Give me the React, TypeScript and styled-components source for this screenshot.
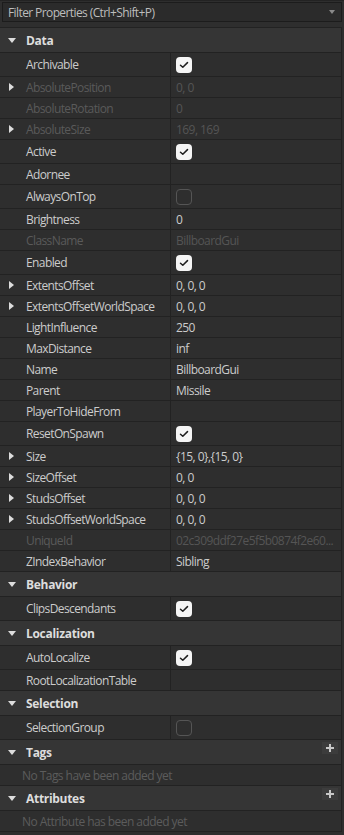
import React from 'react'
import styled, { createGlobalStyle, css } from 'styled-components'

const GlobalStyle = createGlobalStyle`
	html, body {
		margin: 0;
		padding: 0;
		background-color: #2e2e2e;
	}
	body {
		font-family: "Open Sans", "Noto Sans", sans-serif;
		font-size: 12px;
		color: #cccccc;
	}
`

const Panel = styled.div`
	width: 344px;
	height: 835px;
	display: flex;
	flex-direction: column;
	background-color: #2e2e2e;
	overflow: hidden;
`

const FilterBar = styled.div`
	padding: 1px 2px 5px 2px;
	background-color: #2e2e2e;
	border-top: 1px solid #232323;
`

const FilterInput = styled.div`
	height: 18px;
	display: flex;
	align-items: center;
	justify-content: space-between;
	padding: 0 6px 0 5px;
	border: 1px solid #1c1c1c;
	background-color: #2b2b2b;
	color: #bdbdbd;
	letter-spacing: -0.6px;
`

const DropArrow = styled.span`
	width: 0;
	height: 0;
	border-left: 3px solid transparent;
	border-right: 3px solid transparent;
	border-top: 4px solid #8a8a8a;
`

const List = styled.div`
	display: flex;
	flex-direction: column;
	border-top: 1px solid #222222;
	border-right: 1px solid #222222;
	width: 341px;
`

const Header = styled.div`
	height: 24px;
	display: flex;
	align-items: center;
	background-color: #353535;
	border-bottom: 1px solid #222222;
	font-weight: 700;
	color: #dddddd;
	padding-right: 2px;
	letter-spacing: -0.3px;
`

const ArrowCell = styled.div`
	width: 26px;
	flex-shrink: 0;
	display: flex;
	align-items: center;
	padding-left: 8px;
	box-sizing: border-box;
`

const DownTri = styled.span`
	width: 0;
	height: 0;
	border-left: 4px solid transparent;
	border-right: 4px solid transparent;
	border-top: 5px solid #dddddd;
`

const RightTri = styled.span`
	width: 0;
	height: 0;
	border-top: 4px solid transparent;
	border-bottom: 4px solid transparent;
	border-left: 5px solid #dddddd;
	margin-left: 1px;
`

const HeaderTitle = styled.span`
	flex: 1;
`

const AddButton = styled.div`
	width: 16px;
	height: 12px;
	background-color: #3c3c3c;
	display: flex;
	align-items: center;
	justify-content: center;
	margin-right: 1px;
	margin-top: -8px;
`

const Row = styled.div<{ $tall?: boolean }>`
	display: grid;
	grid-template-columns: 171px 1fr;
	height: ${p => (p.$tall ? 23 : 20)}px;
	border-bottom: 1px solid #222222;
`

const NameCell = styled.div<{ $disabled?: boolean }>`
	display: flex;
	align-items: center;
	border-right: 1px solid #222222;
	color: ${p => (p.$disabled ? '#5a5a5a' : '#cccccc')};
	white-space: nowrap;
	overflow: hidden;
	letter-spacing: -0.6px;
`

const ValueCell = styled.div<{ $disabled?: boolean }>`
	display: flex;
	align-items: center;
	padding-left: 5px;
	color: ${p => (p.$disabled ? '#555555' : '#cccccc')};
	white-space: nowrap;
	overflow: hidden;
	letter-spacing: -0.55px;
`

const Check = styled.div<{ $checked: boolean }>`
	width: 16px;
	height: 16px;
	box-sizing: border-box;
	border-radius: 4px;
	display: flex;
	align-items: center;
	justify-content: center;
	${p => p.$checked
		? css`background-color: #f5f5f5;`
		: css`border: 1px solid #555555;`}
`

const Message = styled.div`
	height: 20px;
	display: flex;
	align-items: center;
	padding-left: 22px;
	color: #5c5c5c;
	border-bottom: 1px solid #222222;
	letter-spacing: -0.55px;
`

type Prop = {
	name: string
	value?: string
	check?: boolean
	expand?: boolean
	disabled?: boolean
}

const dataProps: Prop[] = [
	{ name: 'Archivable', check: true },
	{ name: 'AbsolutePosition', value: '0, 0', expand: true, disabled: true },
	{ name: 'AbsoluteRotation', value: '0', disabled: true },
	{ name: 'AbsoluteSize', value: '169, 169', expand: true, disabled: true },
	{ name: 'Active', check: true },
	{ name: 'Adornee', value: '' },
	{ name: 'AlwaysOnTop', check: false },
	{ name: 'Brightness', value: '0' },
	{ name: 'ClassName', value: 'BillboardGui', disabled: true },
	{ name: 'Enabled', check: true },
	{ name: 'ExtentsOffset', value: '0, 0, 0', expand: true },
	{ name: 'ExtentsOffsetWorldSpace', value: '0, 0, 0', expand: true },
	{ name: 'LightInfluence', value: '250' },
	{ name: 'MaxDistance', value: 'inf' },
	{ name: 'Name', value: 'BillboardGui' },
	{ name: 'Parent', value: 'Missile' },
	{ name: 'PlayerToHideFrom', value: '' },
	{ name: 'ResetOnSpawn', check: true },
	{ name: 'Size', value: '{15, 0},{15, 0}', expand: true },
	{ name: 'SizeOffset', value: '0, 0', expand: true },
	{ name: 'StudsOffset', value: '0, 0, 0', expand: true },
	{ name: 'StudsOffsetWorldSpace', value: '0, 0, 0', expand: true },
	{ name: 'UniqueId', value: '02c309ddf27e5f5b0874f2e60...', disabled: true },
	{ name: 'ZIndexBehavior', value: 'Sibling' },
]

const CheckMark = () => (
	<svg width="10" height="8" viewBox="0 0 10 8">
		<path d="M1.5 4.2 L3.8 6.3 L8.5 1.6" fill="none" stroke="#1e1e1e" strokeWidth="1.5" strokeLinecap="round" strokeLinejoin="round" />
	</svg>
)

const Plus = () => (
	<svg width="10" height="10" viewBox="0 0 10 10">
		<path d="M5 1 V9 M1 5 H9" stroke="#c8c8c8" strokeWidth="2" />
	</svg>
)

const PropRow = ({ p }: { p: Prop }) => {
	const tall = p.check !== undefined
	return (
		<Row $tall={tall}>
			<NameCell $disabled={p.disabled}>
				<ArrowCell>{p.expand && <RightTri />}</ArrowCell>
				{p.name}
			</NameCell>
			<ValueCell $disabled={p.disabled}>
				{tall ? <Check $checked={!!p.check}>{p.check && <CheckMark />}</Check> : p.value}
			</ValueCell>
		</Row>
	)
}

const Section = ({ title, add }: { title: string; add?: boolean }) => (
	<Header>
		<ArrowCell><DownTri /></ArrowCell>
		<HeaderTitle>{title}</HeaderTitle>
		{add && <AddButton><Plus /></AddButton>}
	</Header>
)

export default function App() {
	return <>
		<GlobalStyle />
		<Panel>
			<FilterBar>
				<FilterInput>
					<span>Filter Properties (Ctrl+Shift+P)</span>
					<DropArrow />
				</FilterInput>
			</FilterBar>
			<List>
				<Section title="Data" />
				{dataProps.map(p => <PropRow key={p.name} p={p} />)}
				<Section title="Behavior" />
				<PropRow p={{ name: 'ClipsDescendants', check: true }} />
				<Section title="Localization" />
				<PropRow p={{ name: 'AutoLocalize', check: true }} />
				<PropRow p={{ name: 'RootLocalizationTable', value: '' }} />
				<Section title="Selection" />
				<PropRow p={{ name: 'SelectionGroup', check: false }} />
				<Section title="Tags" add />
				<Message>No Tags have been added yet</Message>
				<Section title="Attributes" add />
				<Message>No Attribute has been added yet</Message>
			</List>
		</Panel>
	</>
}
